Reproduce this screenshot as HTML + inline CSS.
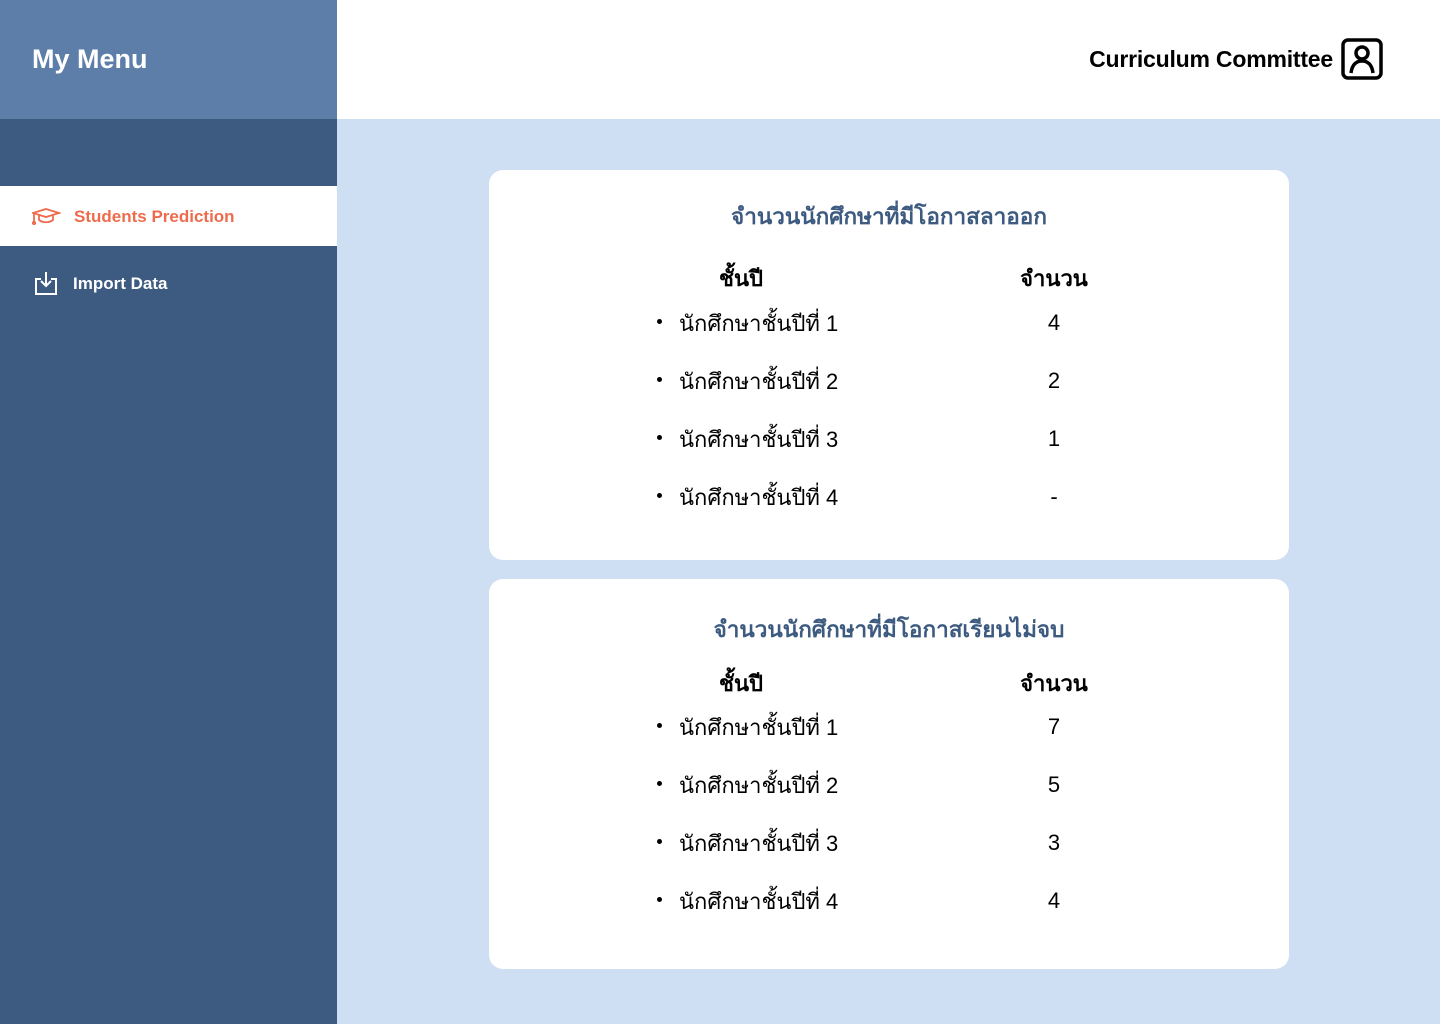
<!DOCTYPE html>
<html><head><meta charset="utf-8"><style>
*{margin:0;padding:0;box-sizing:border-box}
body{width:1440px;height:1024px;background:#CFDFF3;font-family:"Liberation Sans","Noto Sans CJK SC",sans-serif;position:relative;overflow:hidden}
.top{position:absolute;left:0;top:0;width:337px;height:119px;background:#5C7EA8}
.top h1{position:absolute;left:32px;top:44px;color:#fff;font-size:27px;font-weight:bold}
.side{position:absolute;left:0;top:119px;width:337px;height:905px;background:#3D5A80}
.act{position:absolute;left:0;top:186px;width:337px;height:60px;background:#fff}
.act span{position:absolute;left:74px;top:21px;color:#EE6C4D;font-size:17px;font-weight:bold}
.imp{position:absolute;left:73px;top:274px;color:#fff;font-size:17px;font-weight:bold}
.hdr{position:absolute;left:337px;top:0;width:1103px;height:119px;background:#fff}
.hdr span{position:absolute;right:107px;top:46px;font-size:23px;font-weight:bold;color:#000;letter-spacing:-0.2px}
.card{position:absolute;left:489px;width:800px;height:390px;background:#fff;border-radius:14px}
.card h2{position:absolute;left:0;width:800px;text-align:center;top:28px;font-size:22.5px;color:#3D5A80;font-weight:bold}
.h{position:absolute;top:92px;font-size:22px;font-weight:bold;color:#000;width:160px;text-align:center}
.r{position:absolute;left:168px;font-size:22px;color:#000}
.r:before{content:"";position:absolute;left:0;top:13px;width:5px;height:5px;border-radius:50%;background:#000}
.r span{margin-left:22px}
.n{position:absolute;left:515px;width:100px;text-align:center;font-size:22px;color:#000}
</style></head><body>
<div class="top"><h1>My Menu</h1></div>
<div class="side"></div>
<div class="act">
<svg style="position:absolute;left:32px;top:21px" width="29" height="18" viewBox="0 0 29 18" fill="none" stroke="#EE6C4D" stroke-width="1.8"><path d="M14 2L27 6 14 10 1 6z"/><path d="M7 8v5c4 3 10 3 14 0V8"/><path d="M2 6v10"/><circle cx="2" cy="16" r="1.2" fill="#EE6C4D"/></svg>
<span>Students Prediction</span></div>
<svg style="position:absolute;left:34px;top:270px" width="24" height="26" viewBox="0 0 24 26" fill="none" stroke="#fff" stroke-width="2"><path d="M7 9H2v15h20V9h-5"/><path d="M12 2v14M7 11l5 5 5-5"/></svg>
<div class="imp">Import Data</div>
<div class="hdr"><span>Curriculum Committee</span>
<svg style="position:absolute;left:1004px;top:38px" width="42" height="42" viewBox="0 0 42 42" fill="none" stroke="#000" stroke-width="3.5"><rect x="2" y="2" width="38" height="38" rx="5"/><circle cx="21" cy="15" r="6"/><path d="M10 35c1-8 5-12 11-12s10 4 11 12"/></svg></div>

<div class="card" style="top:170px"><h2>จำนวนนักศึกษาที่มีโอกาสลาออก</h2>
<div class="h" style="left:172px;top:91px">ชั้นปี</div><div class="h" style="left:485px;top:91px">จำนวน</div>
<div class="r" style="top:136px"><span>นักศึกษาชั้นปีที่ 1</span></div><div class="n" style="top:140px">4</div>
<div class="r" style="top:194px"><span>นักศึกษาชั้นปีที่ 2</span></div><div class="n" style="top:198px">2</div>
<div class="r" style="top:252px"><span>นักศึกษาชั้นปีที่ 3</span></div><div class="n" style="top:256px">1</div>
<div class="r" style="top:310px"><span>นักศึกษาชั้นปีที่ 4</span></div><div class="n" style="top:314px">-</div>
</div>
<div class="card" style="top:579px"><h2 style="top:32px">จำนวนนักศึกษาที่มีโอกาสเรียนไม่จบ</h2>
<div class="h" style="left:172px;top:87px">ชั้นปี</div><div class="h" style="left:485px;top:87px">จำนวน</div>
<div class="r" style="top:131px"><span>นักศึกษาชั้นปีที่ 1</span></div><div class="n" style="top:135px">7</div>
<div class="r" style="top:189px"><span>นักศึกษาชั้นปีที่ 2</span></div><div class="n" style="top:193px">5</div>
<div class="r" style="top:247px"><span>นักศึกษาชั้นปีที่ 3</span></div><div class="n" style="top:251px">3</div>
<div class="r" style="top:305px"><span>นักศึกษาชั้นปีที่ 4</span></div><div class="n" style="top:309px">4</div>
</div>
</body></html>
